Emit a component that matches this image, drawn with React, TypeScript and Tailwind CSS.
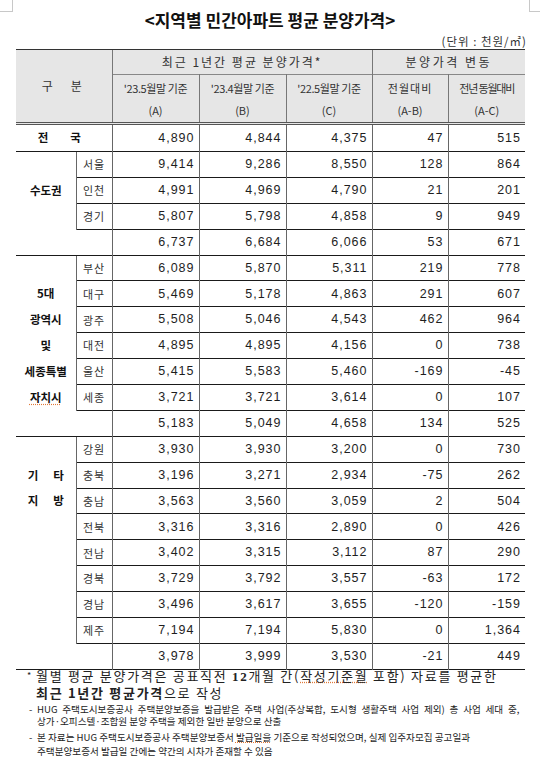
import React from 'react';

type Row = { sub: string; label?: React.ReactNode; vals: string[] };
type Group = { rows: Row[]; total: string[] };

const ko = "font-['Noto_Sans_CJK_KR',sans-serif]";
const num = "font-['Liberation_Sans','Noto_Sans_CJK_KR',sans-serif]";

const spread = (a: string, b: string, w: string) => (
  <span className={`inline-flex justify-between ${w}`}>
    <span>{a}</span>
    <span>{b}</span>
  </span>
);

const groups: Group[] = [
  {
    rows: [
      { sub: '서울', vals: ['9,414', '9,286', '8,550', '128', '864'] },
      { sub: '인천', label: '수도권', vals: ['4,991', '4,969', '4,790', '21', '201'] },
      { sub: '경기', vals: ['5,807', '5,798', '4,858', '9', '949'] },
    ],
    total: ['6,737', '6,684', '6,066', '53', '671'],
  },
  {
    rows: [
      { sub: '부산', vals: ['6,089', '5,870', '5,311', '219', '778'] },
      { sub: '대구', label: '5대', vals: ['5,469', '5,178', '4,863', '291', '607'] },
      { sub: '광주', label: '광역시', vals: ['5,508', '5,046', '4,543', '462', '964'] },
      { sub: '대전', label: '및', vals: ['4,895', '4,895', '4,156', '0', '738'] },
      { sub: '울산', label: '세종특별', vals: ['5,415', '5,583', '5,460', '-169', '-45'] },
      {
        sub: '세종',
        label: <span className="underline decoration-dotted decoration-[#e07a3a] underline-offset-2">자치시</span>,
        vals: ['3,721', '3,721', '3,614', '0', '107'],
      },
    ],
    total: ['5,183', '5,049', '4,658', '134', '525'],
  },
  {
    rows: [
      { sub: '강원', vals: ['3,930', '3,930', '3,200', '0', '730'] },
      { sub: '충북', label: spread('기', '타', 'w-[36px]'), vals: ['3,196', '3,271', '2,934', '-75', '262'] },
      { sub: '충남', label: spread('지', '방', 'w-[36px]'), vals: ['3,563', '3,560', '3,059', '2', '504'] },
      { sub: '전북', vals: ['3,316', '3,316', '2,890', '0', '426'] },
      { sub: '전남', vals: ['3,402', '3,315', '3,112', '87', '290'] },
      { sub: '경북', vals: ['3,729', '3,792', '3,557', '-63', '172'] },
      { sub: '경남', vals: ['3,496', '3,617', '3,655', '-120', '-159'] },
      { sub: '제주', vals: ['7,194', '7,194', '5,830', '0', '1,364'] },
    ],
    total: ['3,978', '3,999', '3,530', '-21', '449'],
  },
];

const subHeads = [
  ["'23.5월말 기준", '(A)'],
  ["'23.4월말 기준", '(B)'],
  ["'22.5월말 기준", '(C)'],
  ['전월대비', '(A-B)'],
  ['전년 동월대비', '(A-C)'],
];

function Values({ vals, top }: { vals: string[]; top: boolean }) {
  return (
    <>
      {vals.map((v, i) => (
        <td
          key={i}
          className={`h-[25.9px] p-0 pr-[4px] text-right align-middle text-[12.5px] tracking-[1px] text-[#1e1e1e] ${num} border-l border-l-[#666] ${
            top ? 'border-t border-t-[#1a1a1a]' : ''
          }`}
        >
          {v}
        </td>
      ))}
    </>
  );
}

export default function App() {
  return (
    <div className={`relative w-[540px] h-[764px] overflow-hidden bg-white text-[#1e1e1e] ${ko}`}>
      {/* page corner marks */}
      <div className="absolute left-0 top-0 h-[12px] w-[13px] border-r border-b border-[#c8c8c8]" />
      <div className="absolute right-0 top-0 h-[12px] w-[11px] border-l border-b border-[#c8c8c8]" />

      <h1 className="pt-[9px] text-center text-[17px] font-bold leading-[22px] text-[#111]">
        {'<지역별 민간아파트 평균 분양가격>'}
      </h1>
      <div className="mt-[2px] pr-[13px] text-right text-[11.5px] leading-[16px] tracking-[1px] text-[#333]">
        (단위 : 천원/㎡)
      </div>

      <table className="ml-[16px] w-[509px] table-fixed border-collapse">
        <colgroup>
          <col className="w-[60px]" />
          <col className="w-[36px]" />
          <col className="w-[87px]" />
          <col className="w-[87px]" />
          <col className="w-[86px]" />
          <col className="w-[76px]" />
          <col className="w-[77px]" />
        </colgroup>
        <thead className="bg-[#e6e6e6] text-[#333]">
          <tr>
            <td
              colSpan={2}
              rowSpan={2}
              className="p-0 pr-[4px] text-center align-middle text-[12px] border-t border-t-[#333] border-b-[3px] border-b-[#555] border-double"
            >
              {spread('구', '분', 'w-[40px]')}
            </td>
            <td
              colSpan={3}
              className="h-[25px] p-0 text-center align-middle text-[12px] tracking-[2px] border-t border-t-[#333] border-l border-l-[#777] border-b border-b-[#888]"
            >
              최근 1년간 평균 분양가격*
            </td>
            <td
              colSpan={2}
              className="h-[25px] p-0 text-center align-middle text-[12px] tracking-[2.5px] border-t border-t-[#333] border-l border-l-[#777] border-b border-b-[#888]"
            >
              분양가격 변동
            </td>
          </tr>
          <tr>
            {subHeads.map(([a, b], i) => (
              <td
                key={i}
                className="h-[49px] p-0 text-center align-middle border-l border-l-[#777] border-b-[3px] border-b-[#555] border-double"
              >
                <div
                  className={`whitespace-nowrap text-[11px] leading-[22px] ${
                    i === 4 ? 'tracking-[-1.2px]' : i === 3 ? 'tracking-[1px]' : 'tracking-[-0.4px]'
                  }`}
                >
                  {a}
                </div>
                <div className="text-[11px] leading-[22px]">{b}</div>
              </td>
            ))}
          </tr>
        </thead>
        <tbody>
          <tr>
            <td colSpan={2} className="h-[28px] p-0 pr-[9px] text-center align-middle text-[11.5px] font-bold text-[#111]">
              {spread('전', '국', 'w-[43px]')}
            </td>
            <Values vals={['4,890', '4,844', '4,375', '47', '515']} top={false} />
          </tr>
          {groups.map((g, gi) => (
            <React.Fragment key={gi}>
              {g.rows.map((r, ri) => (
                <tr key={ri}>
                  <td
                    className={`h-[25.9px] p-0 text-center align-middle text-[11.5px] font-bold text-[#111] ${
                      ri === 0 ? 'border-t border-t-[#1a1a1a]' : ''
                    }`}
                  >
                    {r.label}
                  </td>
                  <td className="h-[25.9px] p-0 text-center align-middle text-[11px] tracking-[1px] text-[#333] border-l border-l-[#666] border-t border-t-[#1a1a1a]">
                    {r.sub}
                  </td>
                  <Values vals={r.vals} top={true} />
                </tr>
              ))}
              <tr>
                <td className="h-[25.9px] p-0" />
                <td className="h-[25.9px] p-0 border-t border-t-[#1a1a1a]" />
                <Values vals={g.total} top={true} />
              </tr>
            </React.Fragment>
          ))}
          <tr>
            <td colSpan={7} className="h-0 p-0 border-t border-t-[#1a1a1a]" />
          </tr>
        </tbody>
      </table>

      <div className="-mt-[2px] pl-[27px] text-[#222]">
        <div className="flex text-[13px] leading-[16px] tracking-[1.7px]">
          <span className="w-[9px] text-[9px]">*</span>
          <span>
            월별 평균 분양가격은 공표직전 <span className="font-['Liberation_Serif'] font-bold">12</span>개월 간(
            <span className="underline decoration-dotted decoration-[#e07a3a]">작성기준월</span> 포함) 자료를 평균한
          </span>
        </div>
        <div className="pl-[9px] text-[13px] leading-[16px] tracking-[1.7px]">
          <span className="font-bold">최근 1년간 평균가격</span>으로 작성
        </div>
        <div className="mt-[2px] flex text-[9.6px] leading-[12px]">
          <span className="w-[10px] pl-[2px]">-</span>
          <div>
            <div className="whitespace-nowrap [word-spacing:2.6px]">
              HUG 주택도시보증공사 주택분양보증을 발급받은 주택 사업(주상복합, 도시형 생활주택 사업 제외) 총 사업 세대 중,
            </div>
            <div className="whitespace-nowrap">상가·오피스텔·조합원 분양 주택을 제외한 일반 분양으로 산출</div>
          </div>
        </div>
        <div className="mt-[3px] flex text-[9.6px] leading-[14px]">
          <span className="w-[10px] pl-[2px]">-</span>
          <div>
            <div className="whitespace-nowrap">
              본 자료는 HUG 주택도시보증공사 주택분양보증서{' '}
              <span className="underline decoration-dotted decoration-[#e07a3a]">발급일을</span> 기준으로 작성되었으며, 실제
              입주자모집 공고일과
            </div>
            <div className="whitespace-nowrap">주택분양보증서 발급일 간에는 약간의 시차가 존재할 수 있음</div>
          </div>
        </div>
      </div>
    </div>
  );
}
